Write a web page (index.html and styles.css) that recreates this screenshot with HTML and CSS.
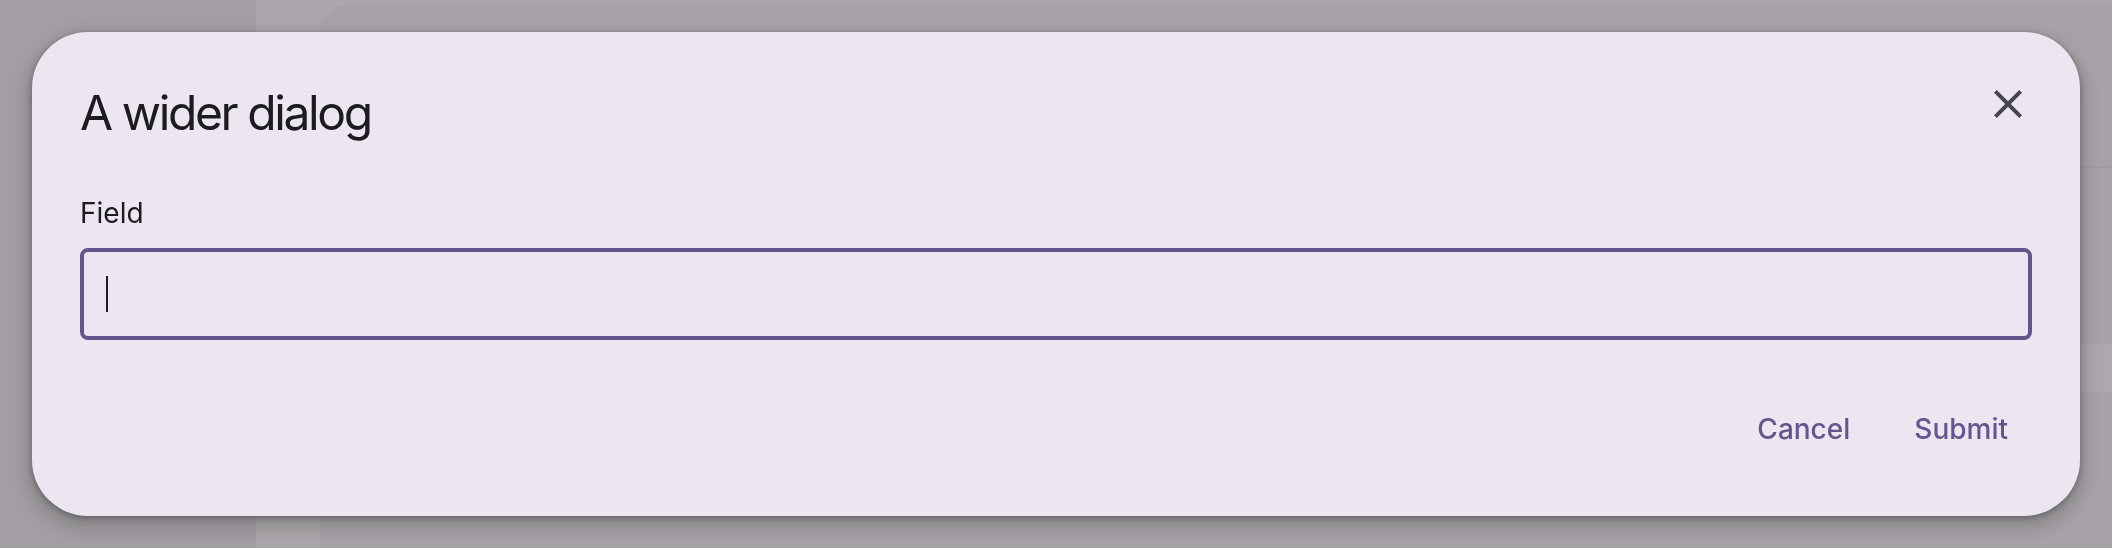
FILE: index.html
```html
<!DOCTYPE html>
<html lang="en">
<head>
<meta charset="utf-8">
<title>A wider dialog</title>
<link rel="stylesheet" href="styles.css">
</head>
<body>
<div class="page">
  <aside class="rail"></aside>
  <main class="main">
    <section class="card">
      <div class="card-head"></div>
      <div class="divider"></div>
      <div class="card-gap"></div>
      <div class="band"></div>
    </section>
  </main>
</div>

<div class="overlay">
  <div class="dialog" role="dialog" aria-labelledby="dlg-title">
    <header class="dialog-header">
      <h1 class="dialog-title" id="dlg-title">A wider dialog</h1>
      <button class="icon-btn" aria-label="Close">
        <svg viewBox="0 0 24 24" width="48" height="48" aria-hidden="true">
          <path d="M19 6.41 17.59 5 12 10.59 6.41 5 5 6.41 10.59 12 5 17.59 6.41 19 12 13.41 17.59 19 19 17.59 13.41 12z" fill="currentColor"/>
        </svg>
      </button>
    </header>
    <label class="field-label">Field</label>
    <div class="field-box"><span class="caret"></span></div>
    <footer class="actions">
      <button class="text-btn">Cancel</button>
      <button class="text-btn">Submit</button>
    </footer>
  </div>
</div>
</body>
</html>
```

FILE: styles.css
```css
* { box-sizing: border-box; }

html, body {
  margin: 0;
  padding: 0;
  height: 100%;
  overflow: hidden;
  font-family: Inter, "Noto Sans", "Liberation Sans", sans-serif;
}

.page {
  display: flex;
  height: 100vh;
}

.rail {
  width: 256px;
  flex: none;
  background: #a29ea3;
}

.main {
  flex: 1;
  display: flex;
  padding: 6px 0 0 64px;
  background: #aaa6ab;
}

.card {
  flex: 1;
  display: flex;
  flex-direction: column;
  background: #a6a2a7;
  border-top-left-radius: 24px;
}

.card-head { height: 160px; }
.divider { height: 2px; background: #9f9ba0; }
.card-gap { height: 176px; }
.band { height: 48px; background: #aca8ad; }

.overlay {
  position: fixed;
  inset: 0;
  display: flex;
  padding: 32px;
}

.dialog {
  flex: 1;
  display: flex;
  flex-direction: column;
  padding: 49px 48px 47px 48px;
  background: #ece6f0;
  border-radius: 56px;
  box-shadow: 0 2px 6px rgba(0, 0, 0, 0.3), 0 8px 16px 6px rgba(0, 0, 0, 0.15);
}

.dialog-header {
  display: flex;
  align-items: flex-start;
  justify-content: space-between;
}

.dialog-title {
  margin: 0;
  font-size: 48px;
  line-height: 64px;
  font-weight: 400;
  letter-spacing: -2.4px;
  color: #1d1b20;
}

.icon-btn {
  margin: -1px 0 0 0;
  padding: 0;
  border: 0;
  background: none;
  width: 48px;
  height: 48px;
  color: #49454f;
  display: flex;
}

.field-label {
  margin-top: 48px;
  font-size: 28px;
  line-height: 40px;
  font-weight: 400;
  color: #1d1b20;
}

.field-box {
  margin-top: 15px;
  height: 92px;
  border: 4px solid #65558f;
  border-radius: 8px;
  display: flex;
  align-items: center;
  padding-left: 22px;
}

.caret {
  width: 2px;
  height: 36px;
  background: #1d1b20;
}

.actions {
  margin-top: auto;
  display: flex;
  justify-content: flex-end;
  gap: 16px;
}

.text-btn {
  height: 80px;
  padding: 0 24px;
  border: 0;
  border-radius: 40px;
  background: none;
  font-family: inherit;
  font-size: 28px;
  line-height: 40px;
  font-weight: 500;
  color: #65558f;
}
```
